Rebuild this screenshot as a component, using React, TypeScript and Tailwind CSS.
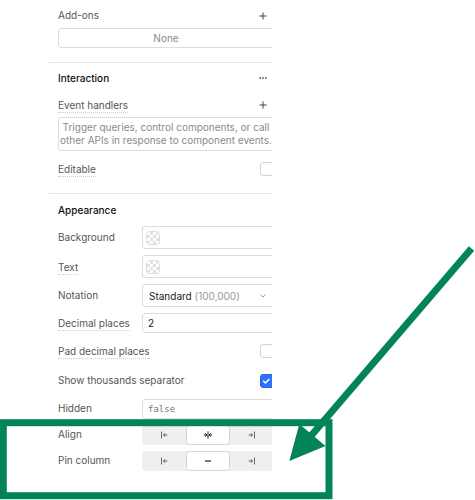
import { useState } from "react";
import type { ReactNode } from "react";
import { clsx } from "clsx";

const INPUT_BOX = "rounded-[3px] border border-[#dcdcdc] bg-white";

function PlusIcon() {
  return (
    <svg width="8" height="8" viewBox="0 0 8 8" fill="none" stroke="#444" strokeWidth="1">
      <path d="M4 0.5v7M0.5 4h7" />
    </svg>
  );
}

function EdgeLeftIcon() {
  return (
    <svg width="8" height="8" viewBox="0 0 8 8" fill="none" stroke="currentColor" strokeWidth="1">
      <path d="M1.5 0.5v7M7.5 4H3.2M5.2 2.2L3.4 4l1.8 1.8" />
    </svg>
  );
}

function EdgeRightIcon() {
  return (
    <svg width="8" height="8" viewBox="0 0 8 8" fill="none" stroke="currentColor" strokeWidth="1">
      <path d="M6.5 0.5v7M0.5 4h4.3M2.8 2.2L4.6 4 2.8 5.8" />
    </svg>
  );
}

function CenterIcon() {
  return (
    <svg width="10" height="8" viewBox="0 0 10 8" fill="none" stroke="#111" strokeWidth="0.9">
      <path d="M5 0.3v7.4M0.8 4h3M6.2 4h3M2.2 2.2L4 4 2.2 5.8M7.8 2.2L6 4l1.8 1.8" />
    </svg>
  );
}

function NoneIcon() {
  return (
    <svg width="8" height="8" viewBox="0 0 8 8" fill="none" stroke="#222" strokeWidth="1.2">
      <path d="M1 4h6" />
    </svg>
  );
}

function ColorSwatch() {
  return (
    <svg className="shrink-0" width="14" height="14" viewBox="0 0 14 14">
      <rect x="0.5" y="0.5" width="13" height="13" rx="3" fill="#fff" stroke="#dcdcdc" />
      <path
        d="M4 1h3v3H4zM10 1h2v3h-2zM1 4h3v3H1zM7 4h3v3H7zM4 7h3v3H4zM10 7h3v3h-3zM1 10h3v2H1zM7 10h3v3H7z"
        fill="#e2e2e2"
      />
    </svg>
  );
}

interface LabelTextProps {
  hint?: boolean;
  children: ReactNode;
}

function LabelText({ hint, children }: LabelTextProps) {
  return (
    <span
      className={clsx(
        "border-b leading-[13px] whitespace-nowrap text-[#555]",
        hint ? "border-dotted border-[#ccc] pt-[2px]" : "border-transparent"
      )}
    >
      {children}
    </span>
  );
}

interface CheckRowProps {
  id: string;
  label: string;
  hint?: boolean;
  defaultChecked?: boolean;
}

function CheckRow({ id, label, hint, defaultChecked }: CheckRowProps) {
  return (
    <div className="flex h-6 items-center justify-between">
      <label htmlFor={id} className="flex">
        <LabelText hint={hint}>{label}</LabelText>
      </label>
      <span className="relative flex">
        <input
          id={id}
          type="checkbox"
          defaultChecked={defaultChecked}
          className="peer size-[14px] appearance-none rounded-[3px] border border-[#d4d4d4] bg-white checked:border-[#2a5fe6] checked:bg-[#3170f9]"
        />
        <svg
          className="pointer-events-none absolute inset-0 hidden peer-checked:block"
          width="14"
          height="14"
          viewBox="0 0 14 14"
          fill="none"
          stroke="#fff"
          strokeWidth="1.5"
        >
          <path d="M3.2 6.8l2.2 2.2L9.4 5" />
        </svg>
      </span>
    </div>
  );
}

interface FieldRowProps {
  id: string;
  label: string;
  hint?: boolean;
  children: ReactNode;
}

function FieldRow({ id, label, hint, children }: FieldRowProps) {
  return (
    <div className="grid grid-cols-[84px_1fr] items-center">
      <label htmlFor={id} className="flex">
        <LabelText hint={hint}>{label}</LabelText>
      </label>
      {children}
    </div>
  );
}

function ColorField({ id, label, hint }: { id: string; label: string; hint?: boolean }) {
  return (
    <FieldRow id={id} label={label} hint={hint}>
      <div className={clsx(INPUT_BOX, "flex h-[23px] items-center gap-1 pl-[3px]")}>
        <ColorSwatch />
        <input id={id} type="text" className="w-full min-w-0 outline-none" />
      </div>
    </FieldRow>
  );
}

interface SegmentedProps {
  label: string;
  middle: ReactNode;
}

function Segmented({ label, middle }: SegmentedProps) {
  const [selected, setSelected] = useState(1);
  const options = [
    { name: "Left", icon: <EdgeLeftIcon /> },
    { name: "Middle", icon: middle },
    { name: "Right", icon: <EdgeRightIcon /> },
  ];

  return (
    <div className="grid grid-cols-[84px_1fr] items-center">
      <div className="flex">
        <LabelText>{label}</LabelText>
      </div>
      <div role="group" aria-label={label} className="grid h-5 grid-cols-3 rounded-[4px] bg-[#efefef]">
        {options.map((option, i) => (
          <button
            key={option.name}
            type="button"
            aria-label={option.name}
            aria-pressed={selected === i}
            onClick={() => setSelected(i)}
            className={clsx(
              "flex items-center justify-center rounded-[4px] border text-[#666]",
              selected === i ? "border-[#d6d6d6] bg-white" : "border-transparent"
            )}
          >
            {option.icon}
          </button>
        ))}
      </div>
    </div>
  );
}

function Inspector() {
  return (
    <div className="ml-[49px] w-[223px] overflow-hidden">
      <div className="w-[234px]">
        <section className="border-b border-[#e4e4e4] px-[9px] pt-2 pb-[14px]">
          <div className="flex h-4 items-center justify-between">
            <LabelText>Add-ons</LabelText>
            <button type="button" aria-label="Add add-on" className="mr-[7px]">
              <PlusIcon />
            </button>
          </div>
          <div className={clsx(INPUT_BOX, "mt-1 flex h-5 items-center justify-center text-[#8a8a8a]")}>
            None
          </div>
        </section>

        <section className="border-b border-[#e4e4e4] px-[9px] pt-[7px] pb-3">
          <div className="flex h-4 items-center justify-between">
            <h2 className="font-medium text-[#111]">Interaction</h2>
            <button type="button" aria-label="More" className="mr-[7px]">
              <svg width="8" height="2" viewBox="0 0 8 2" fill="#333">
                <path d="M0.5 0.3h1.4v1.4H0.5zM3.3 0.3h1.4v1.4H3.3zM6.1 0.3h1.4v1.4H6.1z" />
              </svg>
            </button>
          </div>
          <div className="mt-[11px] flex h-4 items-center justify-between">
            <LabelText hint>Event handlers</LabelText>
            <button type="button" aria-label="Add event handler" className="mr-[7px]">
              <PlusIcon />
            </button>
          </div>
          <p className={clsx(INPUT_BOX, "mt-1 flex h-[34px] items-center justify-center text-center leading-[13px] whitespace-nowrap text-[#8a8a8a]")}>
            Trigger queries, control components, or call
            <br />
            other APIs in response to component events.
          </p>
          <div className="mt-[6px]">
            <CheckRow id="editable" label="Editable" hint />
          </div>
        </section>

        <section className="px-[9px] pt-2 pb-[29px]">
          <h2 className="h-4 font-medium text-[#111]">Appearance</h2>
          <div className="mt-2 flex flex-col gap-[6px]">
            <ColorField id="background" label="Background" />
            <ColorField id="text" label="Text" hint />
            <FieldRow id="notation" label="Notation">
              <div className={clsx(INPUT_BOX, "relative flex h-[23px] items-center justify-between pr-[7px] pl-[6px]")}>
                <span className="text-[#222]">
                  Standard <span className="text-[#999]">(100,000)</span>
                </span>
                <svg width="6" height="4" viewBox="0 0 6 4" fill="none" stroke="#999" strokeWidth="1">
                  <path d="M0.5 0.7L3 3.1 5.5 0.7" />
                </svg>
                <select id="notation" className="absolute inset-0 opacity-0">
                  <option>Standard</option>
                </select>
              </div>
            </FieldRow>
            <FieldRow id="decimals" label="Decimal places" hint>
              <input
                id="decimals"
                type="text"
                defaultValue="2"
                className={clsx(INPUT_BOX, "h-5 w-full min-w-0 px-[5px] text-[#222]")}
              />
            </FieldRow>
            <CheckRow id="pad" label="Pad decimal places" hint />
            <CheckRow id="thousands" label="Show thousands separator" defaultChecked />
            <FieldRow id="hidden" label="Hidden">
              <input
                id="hidden"
                type="text"
                defaultValue="false"
                className={clsx(INPUT_BOX, "h-5 w-full min-w-0 px-[5px] font-['DejaVu_Sans_Mono',monospace] text-[9px] text-[#777]")}
              />
            </FieldRow>
            <Segmented label="Align" middle={<CenterIcon />} />
            <Segmented label="Pin column" middle={<NoneIcon />} />
          </div>
        </section>
      </div>
    </div>
  );
}

// Green frame and arrow drawn over the inspector
function Callout() {
  return (
    <svg
      className="pointer-events-none absolute top-0 left-0"
      width="475"
      height="500"
      viewBox="0 0 475 500"
      fill="none"
      aria-hidden="true"
    >
      <rect x="3.3" y="422.7" width="325.7" height="73" stroke="#028457" strokeWidth="7" />
      <path d="M471.5 248.5L310 437" stroke="#028457" strokeWidth="7" />
      <path d="M289.3 461L299.3 424L325.5 446z" fill="#028457" />
    </svg>
  );
}

export default function App() {
  return (
    <main className="relative overflow-hidden bg-white font-['Inter',sans-serif] text-[10px] leading-[16px]">
      <Inspector />
      <Callout />
    </main>
  );
}
